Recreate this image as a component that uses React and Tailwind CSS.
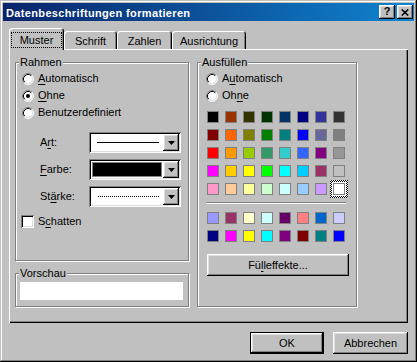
import React from 'react';

const raised = 'shadow-[inset_-1px_-1px_0_#000,inset_1px_1px_0_#fff,inset_-2px_-2px_0_#808080,inset_2px_2px_0_#dfdfdf]';
const sunken = 'shadow-[inset_1px_1px_0_#808080,inset_-1px_-1px_0_#fff,inset_2px_2px_0_#000,inset_-2px_-2px_0_#dfdfdf]';
const etched = 'border border-[#808080] shadow-[inset_1px_1px_0_#fff,1px_1px_0_#fff]';

const palette = [
  ['bg-[#000000]', 'bg-[#993300]', 'bg-[#333300]', 'bg-[#003300]', 'bg-[#003366]', 'bg-[#000080]', 'bg-[#333399]', 'bg-[#333333]'],
  ['bg-[#800000]', 'bg-[#ff6600]', 'bg-[#808000]', 'bg-[#008000]', 'bg-[#008080]', 'bg-[#0000ff]', 'bg-[#666699]', 'bg-[#808080]'],
  ['bg-[#ff0000]', 'bg-[#ff9900]', 'bg-[#99cc00]', 'bg-[#339966]', 'bg-[#33cccc]', 'bg-[#3366ff]', 'bg-[#800080]', 'bg-[#969696]'],
  ['bg-[#ff00ff]', 'bg-[#ffcc00]', 'bg-[#ffff00]', 'bg-[#00ff00]', 'bg-[#00ffff]', 'bg-[#00ccff]', 'bg-[#993366]', 'bg-[#c0c0c0]'],
  ['bg-[#ff99cc]', 'bg-[#ffcc99]', 'bg-[#ffff99]', 'bg-[#ccffcc]', 'bg-[#ccffff]', 'bg-[#99ccff]', 'bg-[#cc99ff]', 'bg-[#ffffff]'],
];

const chartColors = [
  ['bg-[#9999ff]', 'bg-[#993366]', 'bg-[#ffffcc]', 'bg-[#ccffff]', 'bg-[#660066]', 'bg-[#ff8080]', 'bg-[#0066cc]', 'bg-[#ccccff]'],
  ['bg-[#000080]', 'bg-[#ff00ff]', 'bg-[#ffff00]', 'bg-[#00ffff]', 'bg-[#800080]', 'bg-[#800000]', 'bg-[#008080]', 'bg-[#0000ff]'],
];

const Radio = ({ checked }) => (
  <svg width="12" height="12" viewBox="0 0 12 12" className="shrink-0">
    <circle cx="6" cy="6" r="5" fill="#fff" />
    <path d="M2.11 9.89 A5.5 5.5 0 0 1 9.89 2.11" fill="none" stroke="#808080" />
    <path d="M9.89 2.11 A5.5 5.5 0 0 1 2.11 9.89" fill="none" stroke="#fff" />
    <path d="M2.82 9.18 A4.5 4.5 0 0 1 9.18 2.82" fill="none" stroke="#000" />
    <path d="M9.18 2.82 A4.5 4.5 0 0 1 2.82 9.18" fill="none" stroke="#dfdfdf" />
    {checked && <circle cx="6" cy="6" r="2" fill="#000" />}
  </svg>
);

const RadioRow = ({ checked, children }) => (
  <div className="h-[17px] flex items-center gap-[4px]">
    <Radio checked={checked} />
    <span>{children}</span>
  </div>
);

const U = ({ children }) => <span className="underline underline-offset-[2px]">{children}</span>;

const DropBtn = () => (
  <div className={`w-[16px] h-[17px] bg-[#c0c0c0] flex items-center justify-center ${raised}`}>
    <svg width="7" height="4" viewBox="0 0 7 4">
      <polygon points="0,0 7,0 3.5,4" fill="#000" />
    </svg>
  </div>
);

const Combo = ({ children }) => (
  <div className={`w-[92px] h-[21px] bg-white flex p-[2px] ${sunken}`}>
    <div className="flex-1 flex items-center">{children}</div>
    <DropBtn />
  </div>
);

const Group = ({ label, className, children }) => (
  <div className={`relative ${etched} ${className}`}>
    <span className="absolute left-[3px] top-[-7px] px-[1px] bg-[#c0c0c0] leading-[13px]">{label}</span>
    {children}
  </div>
);

const Swatch = ({ color, selected }) => (
  <div className="relative w-[12px] h-[12px]">
    {selected && (
      <span className="absolute -inset-[3px] bg-[image:repeating-conic-gradient(#000_0_25%,#fff_0_50%)] bg-[length:2px_2px]" />
    )}
    {selected && <span className="absolute -inset-[1px] bg-white" />}
    <span className={`absolute inset-0 border border-[#808080] ${color}`} />
  </div>
);

const Tab = ({ label, width, active }) => (
  <div
    className={`relative flex items-center justify-center pt-[3px] bg-[#c0c0c0] rounded-t-[3px] shadow-[inset_1px_1px_0_#fff,inset_-1px_0_0_#000,inset_-2px_0_0_#808080] ${width} ${
      active ? 'h-[22px] mb-[-1px] z-10' : 'h-[18px]'
    }`}
  >
    {label}
    {active && <span className="absolute left-[2px] right-[2px] top-[4px] bottom-[2px] border border-dotted border-black" />}
  </div>
);

const CapBtn = ({ children }) => (
  <div className={`w-[16px] h-[14px] bg-[#c0c0c0] flex items-center justify-center font-bold text-black leading-none ${raised}`}>
    {children}
  </div>
);

export default function App() {
  return (
    <div className="w-[417px] h-[362px] bg-[#c0c0c0] p-[3px] flex flex-col overflow-hidden font-['Liberation_Sans',Arial,sans-serif] text-[11px] leading-[13px] text-black shadow-[inset_-1px_-1px_0_#000,inset_1px_1px_0_#c0c0c0,inset_-2px_-2px_0_#808080,inset_2px_2px_0_#fff]">
      {/* title bar */}
      <div className="h-[18px] shrink-0 flex items-center bg-linear-to-r from-[#0a246a] to-[#1084d0] pl-[3px] pr-[1px]">
        <span className="flex-1 pt-[2px] font-bold text-white tracking-[0.35px]">Datenbeschriftungen formatieren</span>
        <div className="flex gap-[2px]">
          <CapBtn>
            <span className="pb-[1px]">?</span>
          </CapBtn>
          <CapBtn>
            <svg width="8" height="7" viewBox="0 0 8 7">
              <path d="M0.8 0.5 L7.2 6.5 M7.2 0.5 L0.8 6.5" stroke="#000" strokeWidth="1.6" fill="none" />
            </svg>
          </CapBtn>
        </div>
      </div>

      {/* tabs */}
      <div className="mt-[7px] ml-[6px] h-[21px] shrink-0 flex items-end relative z-10">
        <Tab label="Muster" width="w-[55px]" active />
        <Tab label="Schrift" width="w-[53px]" />
        <Tab label="Zahlen" width="w-[55px]" />
        <Tab label="Ausrichtung" width="w-[74px]" />
      </div>

      {/* tab panel */}
      <div className="ml-[6px] w-[399px] h-[274px] shrink-0 flex items-start pl-[6px] pt-[13px] shadow-[inset_1px_1px_0_#fff,inset_-1px_-1px_0_#000,inset_-2px_-2px_0_#808080]">
        <div className="flex flex-col">
          <Group label="Rahmen" className="w-[174px] h-[199px] pt-[7px] pl-[6px]">
            <RadioRow>
              <U>A</U>utomatisch
            </RadioRow>
            <RadioRow checked>
              <U>O</U>hne
            </RadioRow>
            <RadioRow>Benutzerdefiniert</RadioRow>

            <div className="mt-[11px] ml-[18px] flex flex-col gap-[6px]">
              <div className="h-[21px] flex items-center">
                <span className="w-[49px]">
                  A<U>r</U>t:
                </span>
                <Combo>
                  <div className="ml-[6px] w-[62px] h-[1px] bg-black" />
                </Combo>
              </div>
              <div className="h-[21px] flex items-center">
                <span className="w-[49px]">
                  <U>F</U>arbe:
                </span>
                <Combo>
                  <div className="ml-[1px] w-[70px] h-[15px] bg-black border border-[#808080]" />
                </Combo>
              </div>
              <div className="h-[21px] flex items-center">
                <span className="w-[49px]">
                  St<U>ä</U>rke:
                </span>
                <Combo>
                  <div className="ml-[7px] w-[61px] border-t border-dotted border-black" />
                </Combo>
              </div>
            </div>

            <div className="mt-[8px] ml-[-1px] h-[13px] flex items-center gap-[4px]">
              <span className={`w-[13px] h-[13px] bg-white ${sunken}`} />
              <span>
                S<U>c</U>hatten
              </span>
            </div>
          </Group>

          <Group label="Vorschau" className="mt-[12px] w-[174px] h-[34px] pt-[8px] pl-[4px]">
            <div className="w-[163px] h-[18px] bg-white" />
          </Group>
        </div>

        <Group label="Ausfüllen" className="ml-[8px] w-[160px] h-[245px] pt-[7px] pl-[8px]">
          <RadioRow>
            A<U>u</U>tomatisch
          </RadioRow>
          <RadioRow>
            Oh<U>n</U>e
          </RadioRow>

          <div className="ml-[1px]">
            <div className="mt-[7px] grid grid-cols-8 gap-[6px] w-max">
              {palette.map((row, r) =>
                row.map((c, i) => <Swatch key={`${r}-${i}`} color={c} selected={r === 4 && i === 7} />)
              )}
            </div>

            <div className="mt-[7px] w-[139px] h-[2px] border-t border-[#808080] border-b border-b-white" />

            <div className="mt-[8px] grid grid-cols-8 gap-[6px] w-max">
              {chartColors.map((row, r) => row.map((c, i) => <Swatch key={`c${r}-${i}`} color={c} />))}
            </div>

            <div className={`mt-[12px] w-[142px] h-[22px] flex items-center justify-center ${raised}`}>
              <span>
                Fü<U>l</U>leffekte...
              </span>
            </div>
          </div>
        </Group>
      </div>

      {/* dialog buttons */}
      <div className="mt-[9px] pr-[6px] flex justify-end gap-[9px]">
        <div className="w-[74px] h-[22px] border border-black">
          <div className={`w-full h-full flex items-center justify-center ${raised}`}>OK</div>
        </div>
        <div className={`w-[75px] h-[22px] flex items-center justify-center ${raised}`}>Abbrechen</div>
      </div>
    </div>
  );
}
